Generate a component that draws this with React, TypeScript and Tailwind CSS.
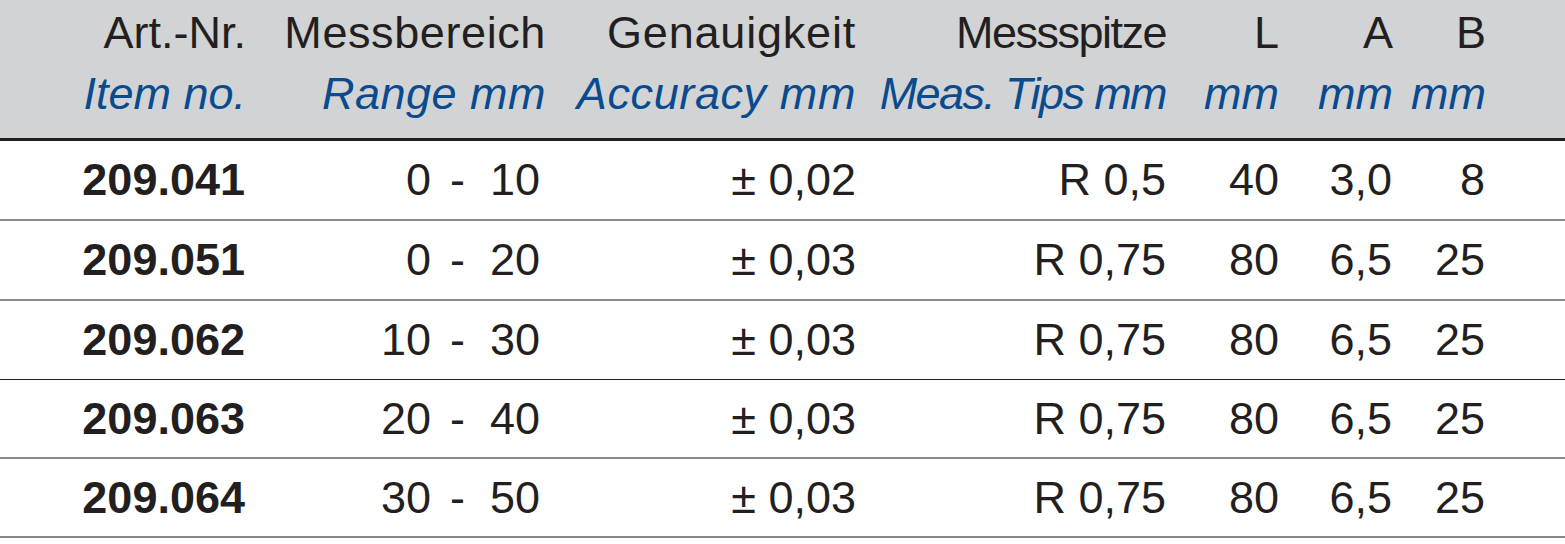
import React from "react";

const rows = [
  { art: "209.041", a: "0", b: "10", acc: "± 0,02", tip: "R 0,5", L: "40", A: "3,0", B: "8", h: "h-[80px]" },
  { art: "209.051", a: "0", b: "20", acc: "± 0,03", tip: "R 0,75", L: "80", A: "6,5", B: "25", h: "h-[80px]" },
  { art: "209.062", a: "10", b: "30", acc: "± 0,03", tip: "R 0,75", L: "80", A: "6,5", B: "25", h: "h-[79px]" },
  { art: "209.063", a: "20", b: "40", acc: "± 0,03", tip: "R 0,75", L: "80", A: "6,5", B: "25", h: "h-[79px]" },
  { art: "209.064", a: "30", b: "50", acc: "± 0,03", tip: "R 0,75", L: "80", A: "6,5", B: "25", h: "h-[79px]" },
];

const grid =
  "grid grid-cols-[246px_300px_310px_310px_113px_114px_93px_1fr]";

const header: { de: string; en: string; deCls?: string; enCls?: string }[] = [
  { de: "Art.-Nr.", en: "Item no." },
  { de: "Messbereich", en: "Range mm", deCls: "tracking-[0.6px]", enCls: "tracking-[0.5px]" },
  { de: "Genauigkeit", en: "Accuracy mm", deCls: "tracking-[0.8px]", enCls: "tracking-[0.6px]" },
  { de: "Messspitze", en: "Meas. Tips mm", deCls: "tracking-[-1.5px]", enCls: "tracking-[-1.6px]" },
  { de: "L", en: "mm" },
  { de: "A", en: "mm" },
  { de: "B", en: "mm" },
];

export default function App() {
  return (
    <div
      className="w-[1565px] h-[544px] bg-white text-[#231f20] text-[45px]"
      style={{ fontFamily: '"Liberation Sans", Arial, sans-serif' }}
    >
      <div className={`${grid} bg-[#d1d3d4] border-b-[3px] border-[#231f20] pt-[2px] pb-[14px] leading-[61px]`}>
        {header.map((h, i) => (
          <div key={i} className="text-right whitespace-nowrap">
            <div className={h.deCls ?? ""}>{h.de}</div>
            <div className={`italic text-[#0a4a8e] ${h.enCls ?? ""}`}>{h.en}</div>
          </div>
        ))}
        <div />
      </div>
      {rows.map((r, i) => (
        <div
          key={i}
          className={`${grid} ${r.h} leading-[78px] whitespace-nowrap ${
            i === 2 ? "border-b border-[#231f20]" : "border-b-2 border-[#8a8a8a]"
          }`}
        >
          <div className="text-right font-bold pr-[1px]">{r.art}</div>
          <div className="flex justify-end pr-[6px]">
            <span>{r.a}</span>
            <span className="ml-[19px]">-</span>
            <span className="ml-[25px]">{r.b}</span>
          </div>
          <div className="text-right">{r.acc}</div>
          <div className="text-right">{r.tip}</div>
          <div className="text-right">{r.L}</div>
          <div className="text-right pr-[1px]">{r.A}</div>
          <div className="text-right pr-[1px]">{r.B}</div>
          <div />
        </div>
      ))}
    </div>
  );
}
